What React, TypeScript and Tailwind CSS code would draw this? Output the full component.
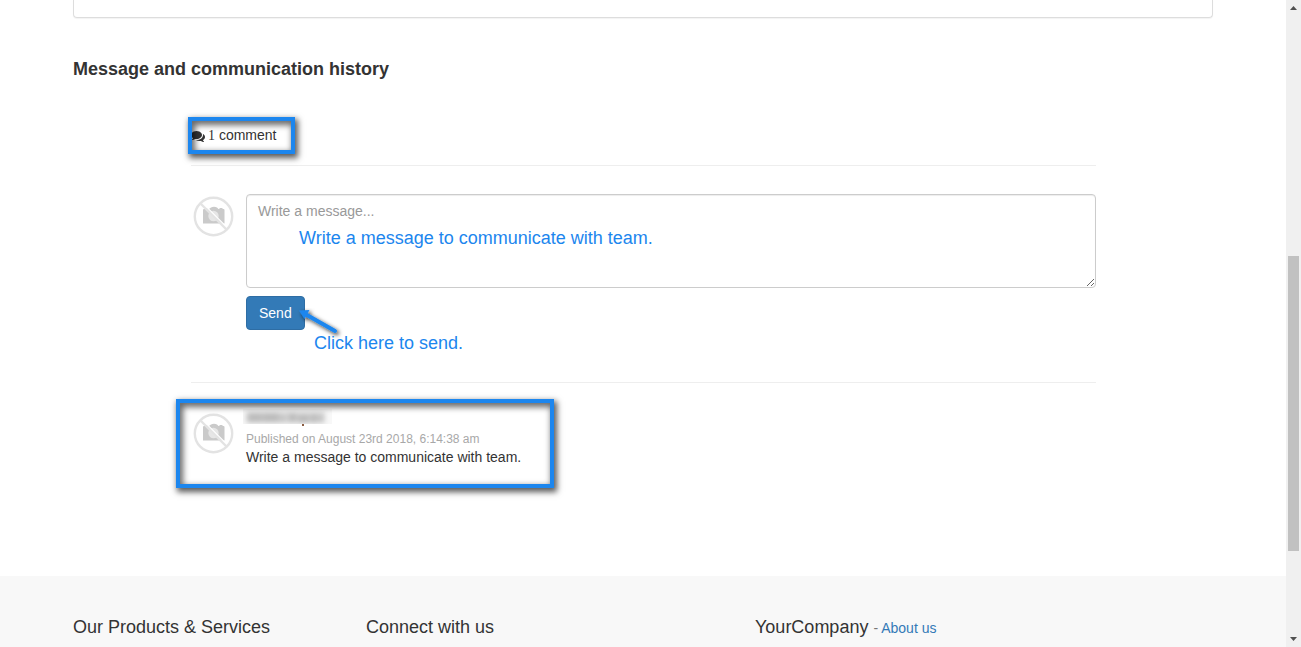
import React from "react";

function CommentsIcon() {
  return (
    <svg viewBox="0 0 1792 1792" className="size-3.5 shrink-0" fill="currentColor" aria-hidden="true">
      <path d="M1408 768q0 139-94 257t-256.5 186.5-353.5 68.5q-86 0-176-16-124 88-278 128-36 9-86 16h-3q-11 0-20.5-8t-11.5-21q-1-3-1-6.500t.5-6.500 2-6l2.500-5 3.500-5.500 4-5 4.500-5 4-4.500q5-6 23-25t26-29.500 22.500-29 25-38.500 20.500-44q-124-72-195-177t-71-224q0-139 94-257t256.500-186.500 353.500-68.500 353.500 68.500 256.500 186.500 94 257zm384 256q0 120-71 224.500t-195 176.500q10 24 20.500 44t25 38.500 22.500 29 26 29.500 23 25q1 1 4 4.500t4.500 5 4 5 3.500 5.500l2.500 5 2 6 .5 6.500-1 6.500q-3 14-13 22t-22 7q-50-7-86-16-154-40-278-128-90 16-176 16-271 0-472-132 58 4 88 4 161 0 309-45t264-129q125-92 192-212t67-254q0-77-23-152 129 71 204 178t75 230z" />
    </svg>
  );
}

function Avatar() {
  return (
    <svg viewBox="0 0 46 46" className="size-[46px] shrink-0" aria-hidden="true">
      <path
        d="M12 16q0-1 1-1h1v-1h3v1h1l2-1.500q3-1.500 6 0l1.500 1.500h1v-1h3v1h1q1 0 1 1v13.500H12z"
        fill="#cacaca"
      />
      <circle cx="22.500" cy="22" r="5.200" fill="#e6e6e6" />
      <path d="M11 8.500 38 35.500" stroke="#fff" strokeWidth="1.200" />
      <circle cx="22.500" cy="22.500" r="18.700" fill="none" stroke="#e3e3e3" strokeWidth="2.400" />
      <path d="M9.500 9.500 36 36" stroke="#e3e3e3" strokeWidth="2.400" />
    </svg>
  );
}

function HiddenName() {
  return (
    <svg viewBox="0 0 90 18" className="-ml-[3px] h-[18px] w-[90px]" role="img" aria-label="Hidden name">
      <defs>
        <filter id="name-blur" x="-10%" y="-40%" width="120%" height="180%">
          <feGaussianBlur stdDeviation="2.600" />
        </filter>
        <clipPath id="name-clip">
          <path d="M0 0h89v15H0z" />
        </clipPath>
      </defs>
      <path d="M0 0h89v15H0z" fill="#f8f8f8" />
      <g clipPath="url(#name-clip)">
        <g filter="url(#name-blur)">
          <path d="M3 3h79v11H3z" fill="#d2d2d2" />
          <path d="M5 4h14v9H5zM20 4h16v9H20zM38 6h3v7h-3zM46 4h7v9h-7zM55 6h11v8H55zM68 5h6v9h-6zM76 6h3v7h-3z" fill="#bcbcbc" />
        </g>
      </g>
      <path d="M59 15h2v2h-2z" fill="#8a5b40" />
    </svg>
  );
}

const frame =
  "pointer-events-none absolute border-4 border-[#1c86ee] shadow-[2px_3px_6px_1px_rgba(0,0,0,0.65),inset_2px_3px_6px_1px_rgba(0,0,0,0.6)]";

function Arrow() {
  return (
    <svg viewBox="0 0 48 40" className="pointer-events-none absolute top-3 left-[50px] h-10 w-12" aria-hidden="true">
      <defs>
        <filter id="arrow-shadow" x="-30%" y="-30%" width="170%" height="170%">
          <feDropShadow dx="2" dy="2" stdDeviation="2" floodColor="#000" floodOpacity="0.8" />
        </filter>
      </defs>
      <g filter="url(#arrow-shadow)">
        <path d="M10 6.500 39 23" stroke="#1c86ee" strokeWidth="4" strokeLinecap="round" />
        <path d="M3 2.500 13.500 2 8.500 11z" fill="#1c86ee" />
      </g>
    </svg>
  );
}

function Composer() {
  return (
    <form className="flex items-start gap-[9px]" onSubmit={(e) => e.preventDefault()}>
      <Avatar />
      <div className="min-w-0 flex-1">
        <div className="relative">
          <textarea
            aria-label="Message"
            placeholder="Write a message..."
            className="block h-[94px] w-full resize-y rounded border border-[#ccc] bg-white px-[11px] py-1.5 text-sm leading-5 shadow-[inset_0_1px_1px_rgba(0,0,0,0.075)] placeholder:text-[#999]"
          />
          <p className="pointer-events-none absolute top-8 left-[53px] text-lg leading-6 text-[#1c86ee]">
            Write a message to communicate with team.
          </p>
        </div>
        <div className="relative mt-2 h-[58px]">
          <button
            type="submit"
            className="rounded border border-[#2e6da4] bg-[#337ab7] px-3 py-1.5 text-sm leading-5 text-white"
          >
            Send
          </button>
          <Arrow />
          <p className="absolute top-[35px] left-[68px] text-lg leading-6 text-[#1c86ee]">Click here to send.</p>
        </div>
      </div>
    </form>
  );
}

function Comment() {
  return (
    <article className="relative mt-7 flex items-start gap-[9px]">
      <Avatar />
      <div>
        <h3 className="-mt-0.5">
          <HiddenName />
        </h3>
        <p className="mt-1 text-xs leading-4 text-[#a8a8a8]">Published on August 23rd 2018, 6:14:38 am</p>
        <p className="text-sm leading-5">Write a message to communicate with team.</p>
      </div>
      <div className={`${frame} -top-3 -left-[15px] h-[89px] w-[378px]`} />
    </article>
  );
}

function Footer() {
  return (
    <footer className="mt-auto h-[71px] shrink-0 overflow-hidden bg-[#f8f8f8] px-[73px] pt-10">
      <div className="mx-auto grid max-w-[1140px] grid-cols-[3fr_4fr_5fr] text-lg leading-[22px]">
        <h4>Our Products &amp; Services</h4>
        <h4 className="pl-2">Connect with us</h4>
        <h4 className="pl-[17px]">
          YourCompany{" "}
          <small className="text-sm leading-4 text-[#777]">
            - <a href="#about" className="text-[#337ab7]">About us</a>
          </small>
        </h4>
      </div>
    </footer>
  );
}

function Scrollbar() {
  return (
    <div className="flex w-[15px] shrink-0 flex-col items-center bg-[#f0f0f0]" aria-hidden="true">
      <svg viewBox="0 0 15 15" className="size-[15px]">
        <path d="M4 10h7L7.500 6z" fill="#505050" />
      </svg>
      <div className="flex w-full flex-1 flex-col px-0.5">
        <div className="flex-[241]" />
        <div className="flex-[295] bg-[#c1c1c1]" />
        <div className="flex-[81]" />
      </div>
      <svg viewBox="0 0 15 15" className="size-[15px]">
        <path d="M4 5h7L7.500 9z" fill="#505050" />
      </svg>
    </div>
  );
}

export default function App() {
  return (
    <div className="flex h-screen overflow-hidden bg-white font-['Liberation_Sans',Arial,sans-serif] text-[#333]">
      <div className="flex min-w-0 flex-1 flex-col">
        <main className="px-[73px]">
          <div className="mx-auto max-w-[1140px]">
            <div className="h-[18px] rounded-b border border-t-0 border-[#ddd] shadow-[0_1px_1px_rgba(0,0,0,0.05)]" />
            <h2 className="mt-10 text-lg leading-[22px] font-bold">Message and communication history</h2>
            <section className="mt-[45px] pr-[117px] pl-[118px]">
              <div className="relative flex items-center gap-[3px] text-sm leading-5">
                <CommentsIcon />
                <p>
                  <span className="font-['Liberation_Serif',serif]">1</span> comment
                </p>
                <div className={`${frame} -top-2 -left-[3px] h-[37px] w-[107px]`} />
              </div>
              <hr className="mt-[19px] mb-7 border-[#eee]" />
              <Composer />
              <hr className="mt-7 border-[#eee]" />
              <Comment />
            </section>
          </div>
        </main>
        <Footer />
      </div>
      <Scrollbar />
    </div>
  );
}
